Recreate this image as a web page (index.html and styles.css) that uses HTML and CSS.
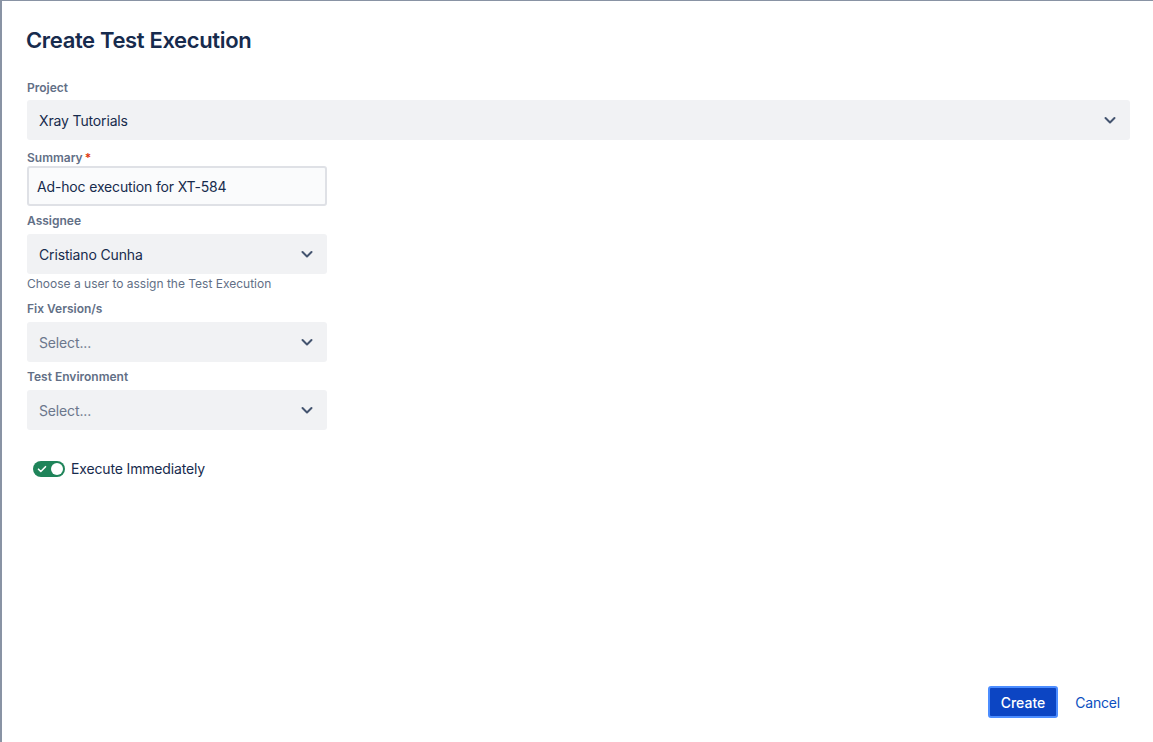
FILE: index.html
```html
<!DOCTYPE html>
<html lang="en">

<head>
    <meta charset="UTF-8">
    <meta name="viewport" content="width=device-width, initial-scale=1.0">
    <title>Create Test Execution</title>
    <link rel="stylesheet" href="styles.css">
</head>

<body>
    <div class="modal">
        <h1 class="modal-title">Create Test Execution</h1>

        <form class="form">
            <div class="field">
                <label class="label">Project</label>
                <div class="select select-wide">
                    <span class="value">Xray Tutorials</span>
                    <svg class="chevron" viewBox="0 0 24 24"><path d="M7.5 10l4.5 4.5 4.5-4.5" /></svg>
                </div>
            </div>

            <div class="field field-tight">
                <label class="label">Summary<span class="required">*</span></label>
                <div class="input">Ad-hoc execution for XT-584</div>
            </div>

            <div class="field">
                <label class="label">Assignee</label>
                <div class="select">
                    <span class="value">Cristiano Cunha</span>
                    <svg class="chevron" viewBox="0 0 24 24"><path d="M7.5 10l4.5 4.5 4.5-4.5" /></svg>
                </div>
                <p class="helper">Choose a user to assign the Test Execution</p>
            </div>

            <div class="field">
                <label class="label">Fix Version/s</label>
                <div class="select">
                    <span class="placeholder">Select...</span>
                    <svg class="chevron" viewBox="0 0 24 24"><path d="M7.5 10l4.5 4.5 4.5-4.5" /></svg>
                </div>
            </div>

            <div class="field">
                <label class="label">Test Environment</label>
                <div class="select">
                    <span class="placeholder">Select...</span>
                    <svg class="chevron" viewBox="0 0 24 24"><path d="M7.5 10l4.5 4.5 4.5-4.5" /></svg>
                </div>
            </div>

            <div class="toggle-row">
                <span class="toggle">
                    <svg class="toggle-check" viewBox="0 0 12 12"><path d="M2.5 6.2l2.3 2.3 4.7-4.8" /></svg>
                    <span class="toggle-knob"></span>
                </span>
                <span class="toggle-label">Execute Immediately</span>
            </div>
        </form>

        <div class="modal-footer">
            <button class="btn btn-primary" type="button">Create</button>
            <button class="btn btn-link" type="button">Cancel</button>
        </div>
    </div>
</body>

</html>
```

FILE: styles.css
```css
* {
    box-sizing: border-box;
    margin: 0;
    padding: 0;
}

html,
body {
    height: 100%;
}

body {
    background-color: #8993a4;
    font-family: Inter, "Noto Sans", sans-serif;
    color: #172b4d;
    padding: 1px 0 0 2px;
}

.modal {
    display: flex;
    flex-direction: column;
    height: 100%;
    background-color: #ffffff;
    padding: 0 23px 0 25px;
}

.modal-title {
    font-size: 22px;
    font-weight: 600;
    line-height: 28px;
    letter-spacing: -0.35px;
    color: #172b4d;
    margin-top: 25px;
    margin-left: -1px;
}

.form {
    display: flex;
    flex-direction: column;
    margin-top: 12px;
    flex: 1;
}

.field {
    display: flex;
    flex-direction: column;
    margin-top: 7px;
}

.field:first-child {
    margin-top: 14px;
}

.label {
    font-size: 12px;
    font-weight: 600;
    line-height: 16px;
    color: #626f86;
    margin-bottom: 5px;
}

.field:first-child .label {
    margin-bottom: 4px;
}

.field-tight {
    margin-top: 10px;
}

.field-tight .label {
    margin-bottom: 0;
}

.required {
    color: #de350b;
    margin-left: 2px;
}

.select {
    display: flex;
    align-items: center;
    justify-content: space-between;
    width: 300px;
    height: 40px;
    padding: 0 8px 0 12px;
    background-color: #f1f2f4;
    border-radius: 3px;
    font-size: 14px;
    letter-spacing: -0.15px;
}

.select-wide {
    width: 100%;
}

.value {
    color: #172b4d;
}

.placeholder {
    color: #6b778c;
}

.chevron {
    width: 24px;
    height: 24px;
    fill: none;
    stroke: #44546f;
    stroke-width: 2;
    stroke-linecap: round;
    stroke-linejoin: round;
}

.input {
    display: flex;
    align-items: center;
    width: 300px;
    height: 40px;
    padding: 0 8px;
    background-color: #fafbfc;
    border: 2px solid #dfe1e6;
    border-radius: 3px;
    font-size: 14px;
    letter-spacing: -0.15px;
    color: #172b4d;
}

.helper {
    font-size: 12px;
    line-height: 16px;
    color: #626f86;
    margin-top: 2px;
    margin-bottom: 2px;
}

.toggle-row {
    display: flex;
    align-items: center;
    margin-top: 30px;
    margin-left: 6px;
}

.toggle {
    position: relative;
    display: inline-flex;
    align-items: center;
    width: 32px;
    height: 16px;
    border-radius: 8px;
    background-color: #1f845a;
}

.toggle-check {
    width: 12px;
    height: 12px;
    margin-left: 3px;
    fill: none;
    stroke: #ffffff;
    stroke-width: 1.6;
    stroke-linecap: round;
    stroke-linejoin: round;
}

.toggle-knob {
    position: absolute;
    right: 2px;
    top: 2px;
    width: 12px;
    height: 12px;
    border-radius: 50%;
    background-color: #ffffff;
}

.toggle-label {
    font-size: 14px;
    letter-spacing: -0.15px;
    color: #172b4d;
    margin-left: 6px;
}

.modal-footer {
    display: flex;
    justify-content: flex-end;
    align-items: center;
    gap: 7px;
    padding-bottom: 24px;
}

.btn {
    font-family: inherit;
    font-size: 14px;
    font-weight: 500;
    height: 32px;
    border-radius: 3px;
    cursor: pointer;
}

.btn-primary {
    padding: 0 11px;
    background-color: #0c45c3;
    color: #ffffff;
    border: 2px solid #4c8dff;
}

.btn-link {
    padding: 0 10px;
    background: none;
    border: none;
    color: #0c4fc0;
    font-weight: 400;
    letter-spacing: -0.2px;
}
```
